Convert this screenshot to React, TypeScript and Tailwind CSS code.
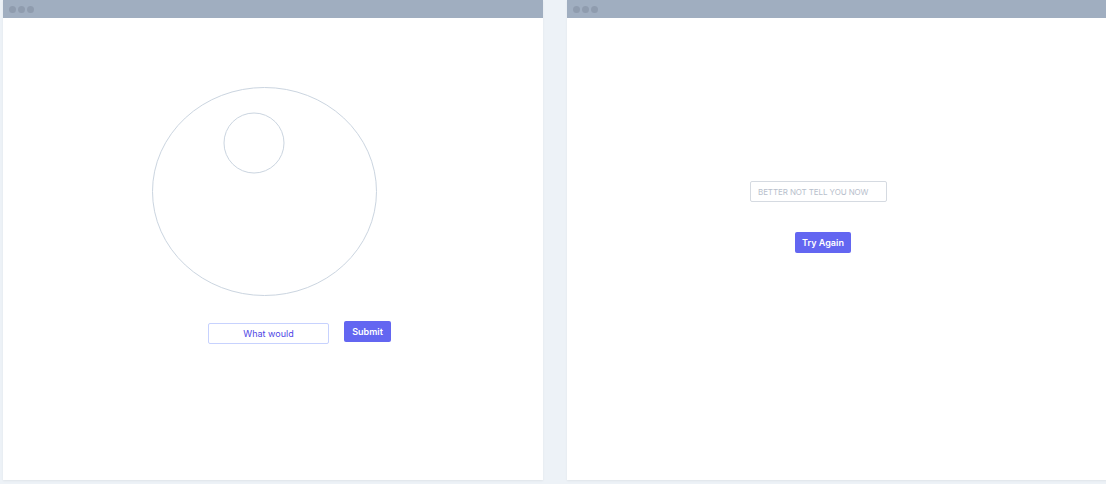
import React from "react";

function TitleBar() {
  return (
    <div className="flex h-[18px] items-center gap-[2px] bg-[#a0aec0] pl-[6px]">
      <span className="h-[7px] w-[7px] rounded-full bg-[#8f9cae]" />
      <span className="h-[7px] w-[7px] rounded-full bg-[#8f9cae]" />
      <span className="h-[7px] w-[7px] rounded-full bg-[#8f9cae]" />
    </div>
  );
}

function Ball() {
  return (
    <svg width="227" height="211" viewBox="0 0 227 211" className="block">
      <ellipse cx="113.5" cy="105.5" rx="112" ry="104" fill="none" stroke="#cbd5e0" strokeWidth="1" />
      <circle cx="103" cy="57" r="30" fill="none" stroke="#cbd5e0" strokeWidth="1" />
    </svg>
  );
}

export default function App() {
  return (
    <div
      className="flex h-[484px] w-[1106px] gap-6 overflow-hidden bg-[#edf2f7] pl-[3px]"
      style={{ fontFamily: "Inter, 'Liberation Sans', sans-serif" }}
    >
      <div className="h-[480px] w-[540px] shrink-0 bg-white shadow-[0_1px_2px_rgba(0,0,0,0.06)]">
        <TitleBar />
        <div className="ml-[148px] mt-[68px]">
          <Ball />
        </div>
        <div className="ml-[205px] mt-[24px] flex items-start gap-[15px]">
          <div className="mt-[2px] flex h-[21px] w-[121px] items-center justify-center rounded-[2px] border border-[#c7d2fe] text-[9px] text-[#4f46e5]">
            What would
          </div>
          <button className="h-[21px] w-[47px] rounded-[2px] bg-[#6366f1] text-[9px] font-semibold text-white">
            Submit
          </button>
        </div>
      </div>
      <div className="h-[480px] w-[540px] shrink-0 bg-white shadow-[0_1px_2px_rgba(0,0,0,0.06)]">
        <TitleBar />
        <div className="ml-[183px] mt-[163px] flex h-[21px] w-[137px] items-center rounded-[2px] border-[1.5px] border-[#d5dae1] pl-[7px] text-[8px] uppercase tracking-[-0.1px] text-[#b8c0cc]">
          Better not tell you now
        </div>
        <div className="ml-[228px] mt-[26px]">
          <button className="h-[21px] w-[56px] rounded-[2px] bg-[#6366f1] text-[9px] font-semibold text-white">
            Try Again
          </button>
        </div>
      </div>
    </div>
  );
}
